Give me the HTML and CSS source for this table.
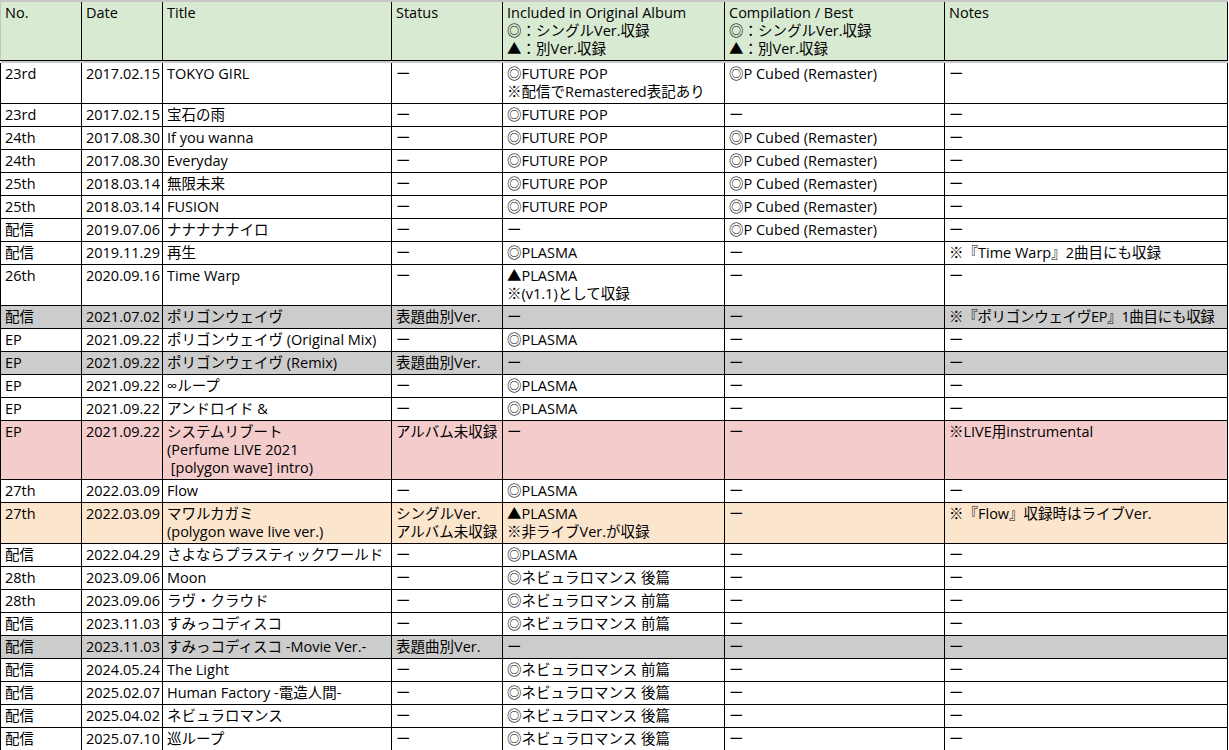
FILE: index.html
```html
<!DOCTYPE html>
<html lang="ja">
<head>
<meta charset="utf-8">
<title>Singles</title>
<link rel="stylesheet" href="styles.css">
</head>
<body>
<table class="sheet">
<colgroup>
<col class="c-no"><col class="c-date"><col class="c-title"><col class="c-status"><col class="c-album"><col class="c-comp"><col class="c-notes">
</colgroup>
<thead>
<tr class="head">
<th>No.</th><th>Date</th><th>Title</th><th>Status</th>
<th>Included in Original Album<br>◎：シングルVer.収録<br>▲：別Ver.収録</th>
<th>Compilation / Best<br>◎：シングルVer.収録<br>▲：別Ver.収録</th>
<th>Notes</th>
</tr>
<tr class="gap"><td colspan="7"></td></tr>
</thead>
<tbody>
<tr><td>23rd</td><td>2017.02.15</td><td>TOKYO GIRL</td><td>ー</td><td>◎FUTURE POP<br>※配信でRemastered表記あり</td><td>◎P Cubed (Remaster)</td><td>ー</td></tr>
<tr><td>23rd</td><td>2017.02.15</td><td>宝石の雨</td><td>ー</td><td>◎FUTURE POP</td><td>ー</td><td>ー</td></tr>
<tr><td>24th</td><td>2017.08.30</td><td>If you wanna</td><td>ー</td><td>◎FUTURE POP</td><td>◎P Cubed (Remaster)</td><td>ー</td></tr>
<tr><td>24th</td><td>2017.08.30</td><td>Everyday</td><td>ー</td><td>◎FUTURE POP</td><td>◎P Cubed (Remaster)</td><td>ー</td></tr>
<tr><td>25th</td><td>2018.03.14</td><td>無限未来</td><td>ー</td><td>◎FUTURE POP</td><td>◎P Cubed (Remaster)</td><td>ー</td></tr>
<tr><td>25th</td><td>2018.03.14</td><td>FUSION</td><td>ー</td><td>◎FUTURE POP</td><td>◎P Cubed (Remaster)</td><td>ー</td></tr>
<tr><td>配信</td><td>2019.07.06</td><td>ナナナナナイロ</td><td>ー</td><td>ー</td><td>◎P Cubed (Remaster)</td><td>ー</td></tr>
<tr><td>配信</td><td>2019.11.29</td><td>再生</td><td>ー</td><td>◎PLASMA</td><td>ー</td><td>※『Time Warp』2曲目にも収録</td></tr>
<tr><td>26th</td><td>2020.09.16</td><td>Time Warp</td><td>ー</td><td>▲PLASMA<br>※(v1.1)として収録</td><td>ー</td><td>ー</td></tr>
<tr class="grey"><td>配信</td><td>2021.07.02</td><td>ポリゴンウェイヴ</td><td>表題曲別Ver.</td><td>ー</td><td>ー</td><td class="tight">※『ポリゴンウェイヴEP』1曲目にも収録</td></tr>
<tr><td>EP</td><td>2021.09.22</td><td>ポリゴンウェイヴ (Original Mix)</td><td>ー</td><td>◎PLASMA</td><td>ー</td><td>ー</td></tr>
<tr class="grey"><td>EP</td><td>2021.09.22</td><td>ポリゴンウェイヴ (Remix)</td><td>表題曲別Ver.</td><td>ー</td><td>ー</td><td>ー</td></tr>
<tr><td>EP</td><td>2021.09.22</td><td>∞ループ</td><td>ー</td><td>◎PLASMA</td><td>ー</td><td>ー</td></tr>
<tr><td>EP</td><td>2021.09.22</td><td>アンドロイド &amp;</td><td>ー</td><td>◎PLASMA</td><td>ー</td><td>ー</td></tr>
<tr class="pink"><td>EP</td><td>2021.09.22</td><td>システムリブート<br>(Perfume LIVE 2021<br>&nbsp;[polygon wave] intro)</td><td>アルバム未収録</td><td>ー</td><td>ー</td><td>※LIVE用instrumental</td></tr>
<tr><td>27th</td><td>2022.03.09</td><td>Flow</td><td>ー</td><td>◎PLASMA</td><td>ー</td><td>ー</td></tr>
<tr class="peach"><td>27th</td><td>2022.03.09</td><td>マワルカガミ<br>(polygon wave live ver.)</td><td>シングルVer.<br>アルバム未収録</td><td>▲PLASMA<br>※非ライブVer.が収録</td><td>ー</td><td>※『Flow』収録時はライブVer.</td></tr>
<tr><td>配信</td><td>2022.04.29</td><td>さよならプラスティックワールド</td><td>ー</td><td>◎PLASMA</td><td>ー</td><td>ー</td></tr>
<tr><td>28th</td><td>2023.09.06</td><td>Moon</td><td>ー</td><td>◎ネビュラロマンス 後篇</td><td>ー</td><td>ー</td></tr>
<tr><td>28th</td><td>2023.09.06</td><td>ラヴ・クラウド</td><td>ー</td><td>◎ネビュラロマンス 前篇</td><td>ー</td><td>ー</td></tr>
<tr><td>配信</td><td>2023.11.03</td><td>すみっコディスコ</td><td>ー</td><td>◎ネビュラロマンス 前篇</td><td>ー</td><td>ー</td></tr>
<tr class="grey"><td>配信</td><td>2023.11.03</td><td>すみっコディスコ -Movie Ver.-</td><td>表題曲別Ver.</td><td>ー</td><td>ー</td><td>ー</td></tr>
<tr><td>配信</td><td>2024.05.24</td><td>The Light</td><td>ー</td><td>◎ネビュラロマンス 前篇</td><td>ー</td><td>ー</td></tr>
<tr><td>配信</td><td>2025.02.07</td><td>Human Factory -電造人間-</td><td>ー</td><td>◎ネビュラロマンス 後篇</td><td>ー</td><td>ー</td></tr>
<tr><td>配信</td><td>2025.04.02</td><td>ネビュラロマンス</td><td>ー</td><td>◎ネビュラロマンス 後篇</td><td>ー</td><td>ー</td></tr>
<tr><td>配信</td><td>2025.07.10</td><td>巡ループ</td><td>ー</td><td>◎ネビュラロマンス 後篇</td><td>ー</td><td>ー</td></tr>
</tbody>
</table>
</body>
</html>
```
FILE: styles.css
```css
html, body {
  margin: 0;
  padding: 0;
  background: #ffffff;
}
body {
  font-family: "Open Sans", "Noto Sans CJK JP", sans-serif;
  font-size: 14.5px;
  color: #000000;
}
.sheet {
  border-collapse: collapse;
  table-layout: fixed;
  width: 1228px;
  border-top: 2px solid #c6c6c6;
}
.c-no { width: 81px; }
.c-date { width: 81px; }
.c-title { width: 229px; }
.c-status { width: 111px; }
.c-album { width: 222px; }
.c-comp { width: 220px; }
.c-notes { width: 283px; }
.sheet th,
.sheet td {
  border: 1px solid #000000;
  padding: 2px 4px 2px 4px;
  line-height: 18px;
  text-align: left;
  vertical-align: top;
  font-weight: normal;
  white-space: nowrap;
  overflow: hidden;
}
.sheet tbody td {
  height: 18px;
}
.head th {
  background: #d9ead3;
  height: 54px;
  border-top: 2px solid #c6c6c6;
}
.head th:first-child {
  border-left: 1px solid #c6c6c6;
}
.gap td {
  height: 2px;
  padding: 0;
  background: #c8c8c8;
  border-left: hidden;
  border-right: hidden;
  border-bottom: hidden;
  line-height: 0;
  font-size: 0;
}
.grey td { background: #cccccc; }
.pink td { background: #f4cccc; }
.peach td { background: #fce5cd; }
.tight { letter-spacing: -0.3px; }
```
